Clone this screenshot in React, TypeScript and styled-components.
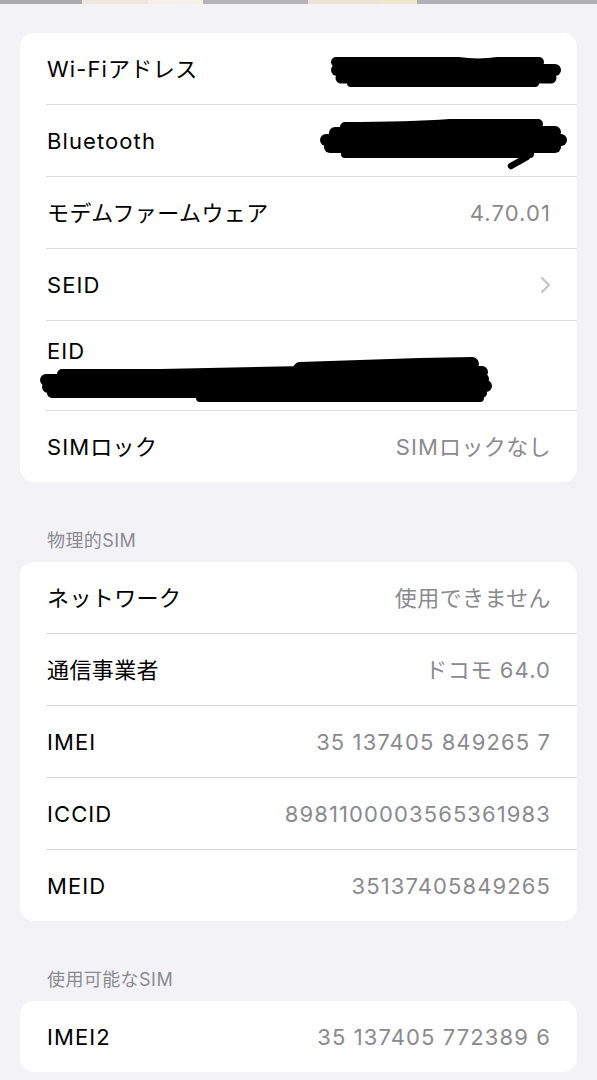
import React from "react";
import styled, { createGlobalStyle } from "styled-components";

const GlobalStyle = createGlobalStyle`
  html, body {
    margin: 0;
    padding: 0;
    background: #f2f2f7;
  }
  body {
    font-family: Inter, "Noto Sans CJK JP", sans-serif;
    -webkit-font-smoothing: antialiased;
  }
`;

const Page = styled.div`
  width: 597px;
  min-height: 1080px;
  background: #f2f2f7;
  overflow: hidden;
`;

const TopStrip = styled.div`
  display: flex;
  height: 4px;
`;

const StripSeg = styled.div<{ $w: number; $c: string }>`
  flex: 0 0 ${(p) => p.$w}px;
  background: ${(p) => p.$c};
`;

const Content = styled.div`
  padding: 29px 20px 0 20px;
`;

const Card = styled.div`
  background: #ffffff;
  border-radius: 14px;
  overflow: hidden;
`;

const RowOuter = styled.div`
  position: relative;
  padding-left: 26px;
`;

const RowInner = styled.div<{ $tall?: boolean }>`
  box-sizing: border-box;
  display: flex;
  align-items: ${(p) => (p.$tall ? "flex-start" : "center")};
  justify-content: space-between;
  height: ${(p) => (p.$tall ? 90 : 72)}px;
  padding: ${(p) => (p.$tall ? "18px" : "0")} 26px 0 1px;
  border-top: 1px solid #dedee2;
  ${RowOuter}:first-child & {
    border-top: none;
    height: 71px;
  }
`;

const Label = styled.span`
  font-size: 22px;
  line-height: 24px;
  color: #000;
  white-space: nowrap;
`;

const Value = styled.span`
  font-size: 22px;
  line-height: 24px;
  color: #8a8a8e;
  white-space: nowrap;
`;

const SectionHeader = styled.div`
  padding: 48px 27px 10px 27px;
  font-size: 18px;
  line-height: 22px;
  color: #8b8b90;
  white-space: nowrap;
  --latin-ls: 0.5px;
  --cjk-ls: 0.4px;
`;

const LatinRun = styled.span`
  letter-spacing: var(--latin-ls, 1.1px);
`;

const CjkRun = styled.span`
  letter-spacing: var(--cjk-ls, 0.4px);
`;

const CJK_RE = /([\u3040-\u30ff\u3400-\u9fff\uff00-\uffef]+)/;

const Mixed = ({ text }: { text: string }) => (
  <>
    {text
      .split(CJK_RE)
      .filter((s) => s.length > 0)
      .map((s, i) =>
        CJK_RE.test(s) ? <CjkRun key={i}>{s}</CjkRun> : <LatinRun key={i}>{s}</LatinRun>
      )}
  </>
);

const Redaction = styled.svg<{ $left: number; $top: number }>`
  position: absolute;
  left: ${(p) => p.$left}px;
  top: ${(p) => p.$top}px;
  overflow: visible;
`;

const Chevron = () => (
  <svg width="11" height="18" viewBox="0 0 11 18" fill="none">
    <path
      d="M2 2 L9 9 L2 16"
      stroke="#c4c4c7"
      strokeWidth="2.2"
      strokeLinecap="round"
      strokeLinejoin="round"
    />
  </svg>
);

const ink = {
  stroke: "#000",
  strokeLinecap: "round" as const,
  strokeLinejoin: "round" as const,
  fill: "none",
};

/* Scribbles drawn in page coordinates; viewBox origin = page position */
const WifiMask = () => (
  <Redaction $left={305} $top={22} width={240} height={36} viewBox="322 55 240 36">
    <path d="M333 62 H455 Q475 65 495 62 L536 62" strokeWidth={10} {...ink} />
    <path d="M334 70 H552" strokeWidth={12} {...ink} />
    <path d="M338 78 H548" strokeWidth={11} {...ink} />
    <path d="M348 83 H532" strokeWidth={8} {...ink} />
  </Redaction>
);

const BtMask = () => (
  <Redaction $left={298} $top={14} width={250} height={58} viewBox="318 118 250 58">
    <path d="M345 127 Q410 127 450 124 L538 124" strokeWidth={10} {...ink} />
    <path d="M335 133 L555 132" strokeWidth={12} {...ink} />
    <path d="M326 140 L561 140" strokeWidth={12} {...ink} />
    <path d="M330 147 L555 147" strokeWidth={12} {...ink} />
    <path d="M345 154 L530 154" strokeWidth={8} {...ink} />
    <path d="M511 166 L527 157 L531 150" strokeWidth={6.5} {...ink} />
  </Redaction>
);

const EidMask = () => (
  <Redaction $left={16} $top={34} width={460} height={50} viewBox="36 354 460 50">
    <path d="M62 374 H160 L305 371" strokeWidth={10} {...ink} />
    <path d="M300 369 L420 365 L472 364" strokeWidth={14} {...ink} />
    <path d="M320 373 L482 372" strokeWidth={12} {...ink} />
    <path d="M46 380 L483 379" strokeWidth={12} {...ink} />
    <path d="M48 387 L486 386" strokeWidth={12} {...ink} />
    <path d="M52 393 L482 393" strokeWidth={10} {...ink} />
    <path d="M200 398 L480 398" strokeWidth={8} {...ink} />
  </Redaction>
);

type RowData = {
  label: string;
  value?: string;
  chevron?: boolean;
  mask?: React.ReactNode;
  tall?: boolean;
};

const card1: RowData[] = [
  { label: "Wi-Fiアドレス", mask: <WifiMask /> },
  { label: "Bluetooth", mask: <BtMask /> },
  { label: "モデムファームウェア", value: "4.70.01" },
  { label: "SEID", chevron: true },
  { label: "EID", mask: <EidMask />, tall: true },
  { label: "SIMロック", value: "SIMロックなし" },
];

const card2: RowData[] = [
  { label: "ネットワーク", value: "使用できません" },
  { label: "通信事業者", value: "ドコモ 64.0" },
  { label: "IMEI", value: "35 137405 849265 7" },
  { label: "ICCID", value: "8981100003565361983" },
  { label: "MEID", value: "35137405849265" },
];

const card3: RowData[] = [{ label: "IMEI2", value: "35 137405 772389 6" }];

const strip: [number, string][] = [
  [82, "#a9a9ae"],
  [66, "#eee8dc"],
  [55, "#f4f0e8"],
  [105, "#b3b3b8"],
  [72, "#ebe4d4"],
  [37, "#efe8cf"],
  [180, "#b0b0b5"],
];

const InfoCard = ({ rows }: { rows: RowData[] }) => (
  <Card>
    {rows.map((r) => (
      <RowOuter key={r.label}>
        <RowInner $tall={r.tall}>
          <Label>
            <Mixed text={r.label} />
          </Label>
          {r.value && (
            <Value>
              <Mixed text={r.value} />
            </Value>
          )}
          {r.chevron && <Chevron />}
        </RowInner>
        {r.mask}
      </RowOuter>
    ))}
  </Card>
);

export default function App() {
  return (
    <Page>
      <GlobalStyle />
      <TopStrip>
        {strip.map(([w, c], i) => (
          <StripSeg key={i} $w={w} $c={c} />
        ))}
      </TopStrip>
      <Content>
        <InfoCard rows={card1} />
        <SectionHeader>
          <Mixed text="物理的SIM" />
        </SectionHeader>
        <InfoCard rows={card2} />
        <SectionHeader>
          <Mixed text="使用可能なSIM" />
        </SectionHeader>
        <InfoCard rows={card3} />
      </Content>
    </Page>
  );
}
